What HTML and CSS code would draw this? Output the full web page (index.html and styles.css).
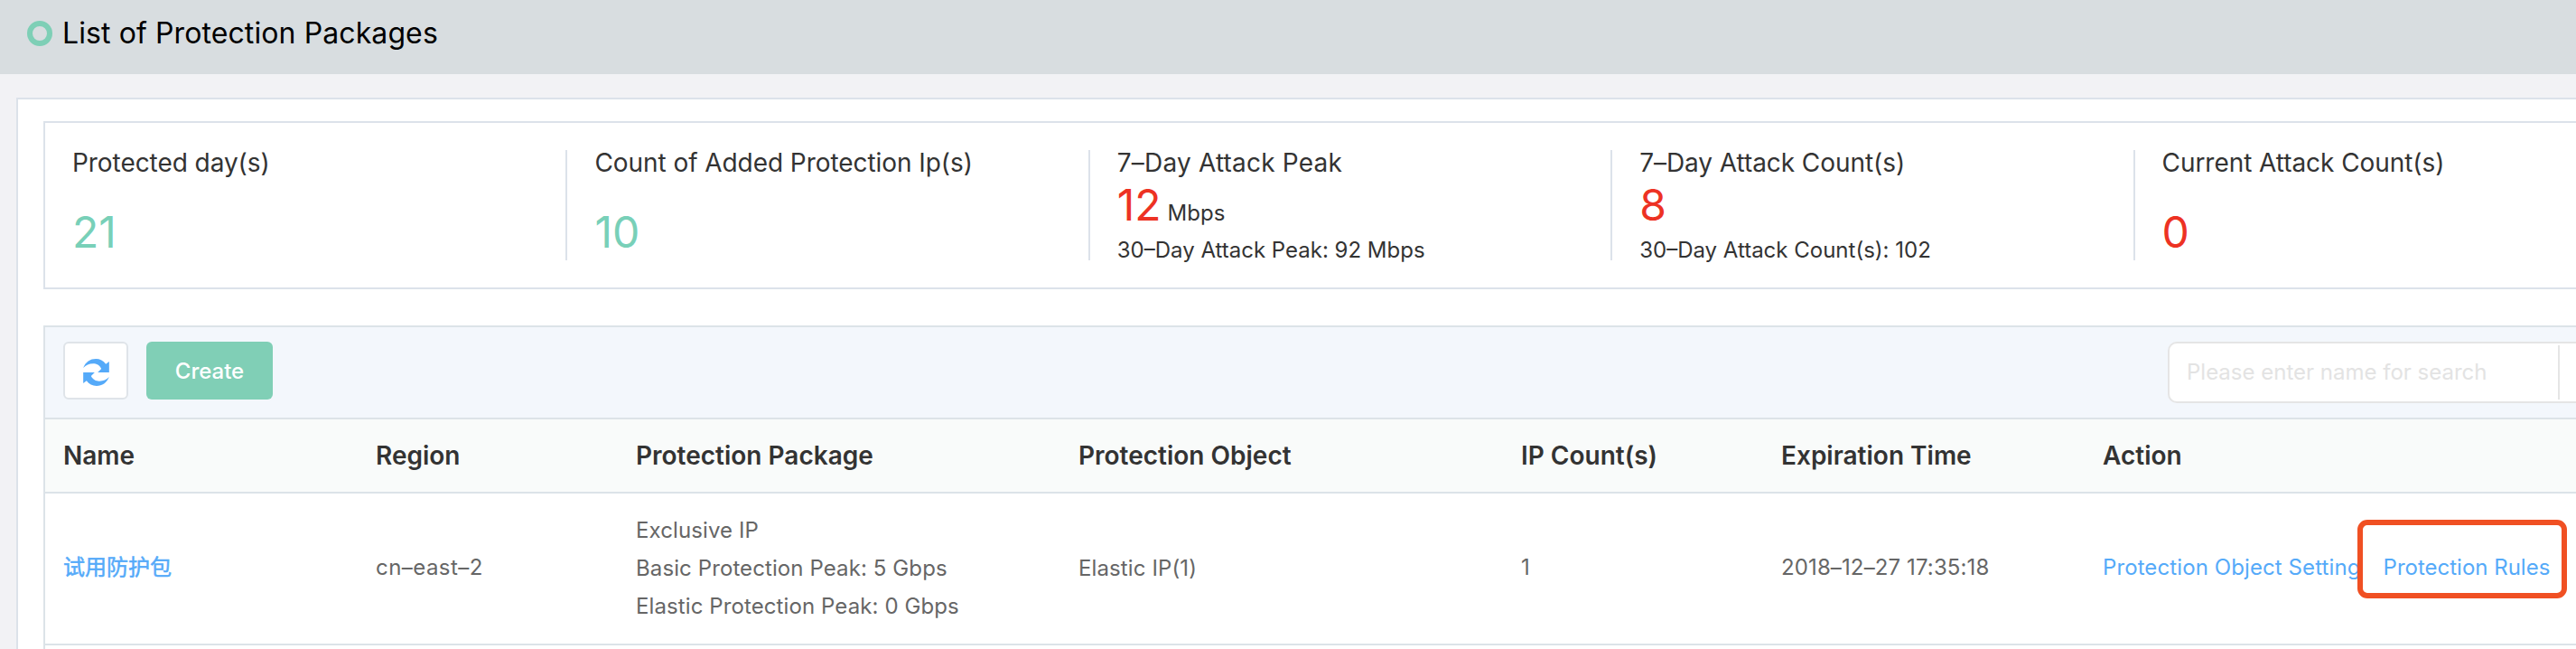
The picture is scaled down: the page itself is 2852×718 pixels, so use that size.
FILE: index.html
```html
<!DOCTYPE html>
<html lang="en">
<head>
<meta charset="utf-8">
<title>List of Protection Packages</title>
<link rel="stylesheet" href="styles.css">
</head>
<body>
<header class="page-header">
  <span class="ring"></span>
  <h1 class="page-title">List of Protection Packages</h1>
</header>
<main class="panel">
  <section class="stats">
    <div class="stat">
      <div class="stat-label">Protected day(s)</div>
      <div class="stat-value stat-value-low green">21</div>
    </div>
    <div class="stat">
      <div class="stat-label">Count of Added Protection Ip(s)</div>
      <div class="stat-value stat-value-low green">10</div>
    </div>
    <div class="stat">
      <div class="stat-label peak-label">7–Day Attack Peak</div>
      <div class="stat-value red">12<span class="unit">Mbps</span></div>
      <div class="stat-note">30–Day Attack Peak: 92 Mbps</div>
    </div>
    <div class="stat">
      <div class="stat-label">7–Day Attack Count(s)</div>
      <div class="stat-value red">8</div>
      <div class="stat-note">30–Day Attack Count(s): 102</div>
    </div>
    <div class="stat">
      <div class="stat-label">Current Attack Count(s)</div>
      <div class="stat-value stat-value-low red">0</div>
    </div>
  </section>
  <section class="list">
    <div class="toolbar">
      <button class="refresh" aria-label="Refresh">
        <svg class="refresh-icon" viewBox="95 81 86 90">
          <path id="arrow" d="M95 111C103 91 118 81 137 81C150 81 162 87 170 98L181 90V126H143L155 114C149 102 139 97 128 97C114 97 104 102 95 111Z"/>
          <use href="#arrow" transform="rotate(180 138 126)"/>
        </svg>
      </button>
      <button class="create">Create</button>
      <div class="search">
        <span class="placeholder">Please enter name for search</span>
        <span class="search-divider"></span>
      </div>
    </div>
    <div class="row head">
      <div class="cell">Name</div>
      <div class="cell">Region</div>
      <div class="cell">Protection Package</div>
      <div class="cell">Protection Object</div>
      <div class="cell">IP Count(s)</div>
      <div class="cell">Expiration Time</div>
      <div class="cell">Action</div>
    </div>
    <div class="row body">
      <div class="cell"><a class="link name">试用防护包</a></div>
      <div class="cell region">cn–east–2</div>
      <div class="cell package">
        <div>Exclusive IP</div>
        <div>Basic Protection Peak: 5 Gbps</div>
        <div>Elastic Protection Peak: 0 Gbps</div>
      </div>
      <div class="cell object">Elastic IP(1)</div>
      <div class="cell">1</div>
      <div class="cell date">2018–12–27 17:35:18</div>
      <div class="cell actions">
        <a class="link setting">Protection Object Setting</a>
        <a class="link rules">Protection Rules<span class="highlight"></span></a>
      </div>
    </div>
  </section>
</main>
</body>
</html>
```
FILE: styles.css
```css
* { box-sizing: border-box; }
body {
  margin: 0;
  width: 2852px;
  height: 718px;
  background: #f2f2f5;
  color: #333;
  font-family: Inter, "Noto Sans CJK SC", sans-serif;
  font-size: 24px;
  white-space: nowrap;
}
.page-header {
  display: flex;
  align-items: center;
  gap: 11px;
  height: 82px;
  padding: 0 0 9px 30px;
  background: #d8dde0;
}
.ring {
  width: 28px;
  height: 28px;
  border: 6px solid #7ecfb6;
  border-radius: 50%;
}
.page-title {
  margin: 0;
  color: #000;
  font-size: 32px;
  font-weight: 400;
  line-height: 73px;
  letter-spacing: 0.1px;
}
.panel {
  height: 610px;
  margin: 26px 0 0 18px;
  padding: 24px 0 0 28px;
  border: solid #dce2ea;
  border-width: 2px 0 0 2px;
  background: #fff;
}
.stats {
  display: flex;
  height: 186px;
  padding: 30px 0;
  border: solid #dce2ea;
  border-width: 2px 0 2px 2px;
}
.stat {
  flex: 0 0 578.4px;
  height: 122px;
  padding-left: 30px;
  border-right: 2px solid #dce2ea;
}
.stat:last-child {
  flex: 1;
  border-right: 0;
}
.stat-label {
  font-size: 28px;
  line-height: 28px;
  letter-spacing: -0.06px;
}
.peak-label { letter-spacing: 0.2px; }
.stat-value {
  height: 57px;
  margin-top: 4px;
  font-size: 48px;
  line-height: 57px;
}
.stat-value-low { margin-top: 34px; }
.green { color: #78d0b8; }
.red { color: #ed3223; }
.unit {
  margin-left: 7px;
  color: #333;
  font-size: 24px;
}
.stat-note {
  margin-top: 6px;
  line-height: 32px;
}
.list {
  height: 358px;
  margin-top: 40px;
  border: solid #dce3e8;
  border-width: 2px 0 0 2px;
}
.toolbar {
  display: flex;
  align-items: flex-start;
  height: 102px;
  padding: 16px 0 0 20px;
  border-bottom: 2px solid #dce3e8;
  background: #f3f7fc;
}
.refresh {
  display: flex;
  align-items: center;
  justify-content: center;
  width: 72px;
  height: 64px;
  padding: 4px 0 0;
  border: 2px solid #dfe4e9;
  border-radius: 6px;
  background: #fff;
}
.refresh-icon {
  width: 29px;
  height: 30px;
  fill: #55aaf9;
}
.create {
  width: 140px;
  height: 64px;
  margin-left: 20px;
  padding: 0;
  border: 0;
  border-radius: 6px;
  background: #80cfb6;
  color: #fff;
  font: 500 24px/63px Inter, sans-serif;
}
.search {
  display: flex;
  align-items: center;
  flex: 1;
  height: 68px;
  margin-left: 2098px;
  padding-left: 19px;
  border: solid #e5e5e5;
  border-width: 2px 0 2px 2px;
  border-radius: 10px 0 0 10px;
  background: #fff;
}
.placeholder {
  width: 411px;
  color: #e3e3e3;
  line-height: 62px;
}
.search-divider {
  width: 2px;
  height: 60px;
  background: #e5e5e5;
}
.row {
  display: grid;
  grid-template-columns: 346px 288px 490px 490px 288px 356px 1fr;
  align-items: center;
  border-bottom: 2px solid #dce3e8;
}
.cell { padding-left: 20px; }
.head {
  height: 82px;
  background: #f9fbfa;
  font-size: 28px;
  font-weight: 600;
}
.body {
  height: 168px;
  color: #666;
  line-height: 42px;
}
.body .cell { padding-bottom: 3px; }
.body .package, .body .object { padding-bottom: 0; }
.package { letter-spacing: 0.1px; }
.region { letter-spacing: 0.45px; }
.date, .object { letter-spacing: 0.12px; }
.link { color: #55aaf9; }
.name { -webkit-text-stroke: 0.5px #55aaf9; }
.actions { display: flex; gap: 25px; }
.setting { letter-spacing: 0.1px; }
.rules { position: relative; }
.highlight {
  position: absolute;
  top: -32px;
  left: -29px;
  width: 232px;
  height: 87px;
  border: 6px solid #f05023;
  border-radius: 11px;
}
```
